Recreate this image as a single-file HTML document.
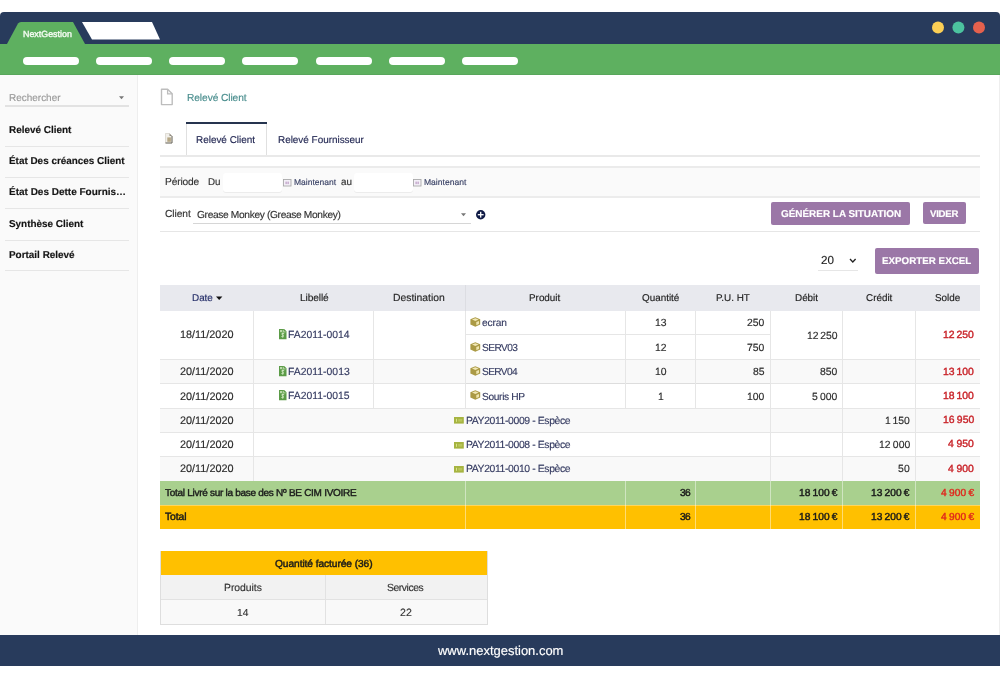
<!DOCTYPE html>
<html><head><meta charset="utf-8"><style>
html,body{margin:0;padding:0;width:1000px;height:679px;overflow:hidden;background:#fff;}
body{position:relative;font-family:"Liberation Sans", sans-serif;text-rendering:geometricPrecision;}
body>div,body>svg{position:absolute;will-change:transform;}
body>div{-webkit-text-stroke-width:0.15px;}
</style></head><body>
<div style="left:0px;top:12px;width:1000px;height:32px;background:#283b5c;border-radius:4px 4px 0 0"></div>
<svg style="left:0;top:0" width="1000" height="80" viewBox="0 0 1000 80">
<path d="M6.7 44.5 L18 23.5 Q19 22 21 22 L73 22 L85.3 44.5 Z" fill="#5eb060"/>
<path d="M82 22 L152 22 L160 39.5 L92 39.5 Z" fill="#fff"/>
<circle cx="938" cy="27.6" r="6" fill="#fccf55"/>
<circle cx="958.4" cy="27.6" r="6" fill="#4cc39f"/>
<circle cx="979" cy="27.6" r="6" fill="#e5614d"/>
</svg>
<div style="left:0px;top:43.5px;width:1000px;height:31px;background:#5eb060;"></div>
<div style="left:0px;top:74px;width:1000px;height:1px;background:#58a65b;"></div>
<div style="left:22.79px;top:25px;font-size:8.90px;line-height:18px;height:18px;color:#f2faf0;font-weight:normal;white-space:nowrap;-webkit-text-stroke:0.4px #f2faf0;">NextGestion</div>
<div style="left:23.0px;top:57px;width:56px;height:8px;background:#fff;border-radius:4px"></div>
<div style="left:96.15px;top:57px;width:56px;height:8px;background:#fff;border-radius:4px"></div>
<div style="left:169.3px;top:57px;width:56px;height:8px;background:#fff;border-radius:4px"></div>
<div style="left:242.45000000000002px;top:57px;width:56px;height:8px;background:#fff;border-radius:4px"></div>
<div style="left:315.6px;top:57px;width:56px;height:8px;background:#fff;border-radius:4px"></div>
<div style="left:388.75px;top:57px;width:56px;height:8px;background:#fff;border-radius:4px"></div>
<div style="left:461.90000000000003px;top:57px;width:56px;height:8px;background:#fff;border-radius:4px"></div>
<div style="left:0px;top:75px;width:137px;height:560px;background:#fafafa;"></div>
<div style="left:137px;top:75px;width:1px;height:560px;background:#eeeeee;"></div>
<div style="left:999px;top:75px;width:1px;height:560px;background:#eeeeee;"></div>
<div style="left:8.70px;top:89px;font-size:9.98px;line-height:20px;height:20px;color:#9a9a9a;font-weight:normal;white-space:nowrap;">Rechercher</div>
<svg style="left:119px;top:95.5px" width="6" height="4"><path d="M0 0.3 L5 0.3 L2.5 3.3 Z" fill="#777"/></svg>
<div style="left:5px;top:105px;width:124px;height:2px;background:#e2e2e2;"></div>
<div style="left:8.80px;top:121px;font-size:9.94px;line-height:20px;height:20px;color:#141414;font-weight:bold;white-space:nowrap;">Relevé Client</div>
<div style="left:8.81px;top:152px;font-size:9.91px;line-height:20px;height:20px;color:#141414;font-weight:bold;white-space:nowrap;">État Des créances Client</div>
<div style="left:8.80px;top:183px;font-size:9.99px;line-height:20px;height:20px;color:#141414;font-weight:bold;white-space:nowrap;">État Des Dette Fournis…</div>
<div style="left:9.20px;top:215px;font-size:9.92px;line-height:20px;height:20px;color:#141414;font-weight:bold;white-space:nowrap;">Synthèse Client</div>
<div style="left:8.80px;top:246px;font-size:9.94px;line-height:20px;height:20px;color:#141414;font-weight:bold;white-space:nowrap;">Portail Relevé</div>
<div style="left:5px;top:145.5px;width:124px;height:1px;background:#e6e6e6;"></div>
<div style="left:5px;top:176.5px;width:124px;height:1px;background:#e6e6e6;"></div>
<div style="left:5px;top:208px;width:124px;height:1px;background:#e6e6e6;"></div>
<div style="left:5px;top:239.5px;width:124px;height:1px;background:#e6e6e6;"></div>
<div style="left:5px;top:270px;width:124px;height:1px;background:#e6e6e6;"></div>
<div style="left:0px;top:635px;width:1000px;height:31px;background:#283b5c;"></div>
<div style="left:437.80px;top:638px;font-size:12.97px;line-height:26px;height:26px;color:#fff;font-weight:normal;white-space:nowrap;">www.nextgestion.com</div>
<svg style="left:160px;top:88px" width="14" height="18" viewBox="0 0 14 18">
<path d="M1.5 1.2 H7.6 L12.2 5.8 V16.6 H1.5 Z" fill="#fff" stroke="#bdbdbd" stroke-width="1.4" stroke-linejoin="round"/>
<path d="M7.6 1.2 V5.8 H12.2" fill="none" stroke="#bdbdbd" stroke-width="1.3"/>
</svg>
<div style="left:186.98px;top:88px;font-size:10.20px;line-height:21px;height:21px;color:#4a8e8e;font-weight:normal;white-space:nowrap;letter-spacing:-0.081px;">Relevé Client</div>
<div style="left:160px;top:155px;width:820px;height:2px;background:#e9e9e9;"></div>
<svg style="left:164.8px;top:132.9px" width="8" height="11" viewBox="0 0 8 11">
<path d="M0.5 0.5 H4.5 L7 3 V10 H0.5 Z" fill="#f1efea" stroke="#cfcbc1" stroke-width="0.6"/>
<path d="M4.5 0.5 L7 3 H4.5 Z" fill="#8f8b80"/>
<path d="M7 3 V10 H0.5" fill="none" stroke="#6e6a60" stroke-width="1"/>
<rect x="2.3" y="4.4" width="3.6" height="4.4" fill="#b5a785"/>
</svg>
<div style="left:186px;top:124px;width:81px;height:31px;background:#fff;border-left:1px solid #e0e0e0;border-right:1px solid #e0e0e0;box-sizing:border-box"></div>
<div style="left:186px;top:122px;width:81px;height:2px;background:#26344f;"></div>
<div style="left:196.01px;top:131px;font-size:9.93px;line-height:20px;height:20px;color:#1f2450;font-weight:normal;white-space:nowrap;">Relevé Client</div>
<div style="left:278.11px;top:131px;font-size:9.91px;line-height:20px;height:20px;color:#1f2450;font-weight:normal;white-space:nowrap;">Relevé Fournisseur</div>
<div style="left:160px;top:167px;width:820px;height:30px;background:#fafafa;"></div>
<div style="left:160px;top:166px;width:820px;height:2px;background:#ebebeb;"></div>
<div style="left:160px;top:196px;width:820px;height:2px;background:#ececec;"></div>
<div style="left:164.88px;top:172px;font-size:10.20px;line-height:21px;height:21px;color:#333;font-weight:normal;white-space:nowrap;letter-spacing:-0.144px;">Période</div>
<div style="left:208.00px;top:173px;font-size:9.80px;line-height:20px;height:20px;color:#333;font-weight:normal;white-space:nowrap;">Du</div>
<div style="left:223px;top:173px;width:58.5px;height:18.5px;background:#fff;border-radius:3px;box-shadow:0 1px 0 #ececec"></div>
<svg style="left:283px;top:178.5px" width="9" height="8" viewBox="0 0 9 8"><rect x="0.5" y="0.5" width="7.5" height="6.5" fill="#f4f0f8" stroke="#aaa" stroke-width="0.9"/><rect x="2.6" y="2.6" width="1" height="2.5" fill="#b08ab8"/><rect x="4.6" y="2.6" width="1" height="2.5" fill="#b08ab8"/></svg>
<div style="left:293.62px;top:174px;font-size:8.50px;line-height:17px;height:17px;color:#3a4266;font-weight:normal;white-space:nowrap;">Maintenant</div>
<div style="left:341.30px;top:173px;font-size:9.90px;line-height:20px;height:20px;color:#333;font-weight:normal;white-space:nowrap;">au</div>
<div style="left:353.5px;top:173px;width:58.5px;height:18.5px;background:#fff;border-radius:3px;box-shadow:0 1px 0 #ececec"></div>
<svg style="left:413px;top:178.5px" width="9" height="8" viewBox="0 0 9 8"><rect x="0.5" y="0.5" width="7.5" height="6.5" fill="#f4f0f8" stroke="#aaa" stroke-width="0.9"/><rect x="2.6" y="2.6" width="1" height="2.5" fill="#b08ab8"/><rect x="4.6" y="2.6" width="1" height="2.5" fill="#b08ab8"/></svg>
<div style="left:424.12px;top:173px;font-size:8.56px;line-height:18px;height:18px;color:#3a4266;font-weight:normal;white-space:nowrap;">Maintenant</div>
<div style="left:160px;top:231px;width:820px;height:1px;background:#e6e6e6;"></div>
<div style="left:165.19px;top:204px;font-size:10.20px;line-height:21px;height:21px;color:#333;font-weight:normal;white-space:nowrap;letter-spacing:-0.060px;">Client</div>
<div style="left:196.69px;top:205px;font-size:10.20px;line-height:21px;height:21px;color:#333;font-weight:normal;white-space:nowrap;letter-spacing:-0.342px;">Grease Monkey (Grease Monkey)</div>
<div style="left:193px;top:223px;width:278px;height:1px;background:#d6d6d6;"></div>
<svg style="left:461px;top:212.8px" width="6" height="4"><path d="M0 0.3 L5 0.3 L2.5 3.3 Z" fill="#777"/></svg>
<svg style="left:475.8px;top:209.8px" width="10" height="10" viewBox="0 0 10 10"><circle cx="4.7" cy="4.7" r="4.7" fill="#0f1a45"/><rect x="1.8" y="4.05" width="5.8" height="1.3" fill="#fff"/><rect x="4.05" y="1.8" width="1.3" height="5.8" fill="#fff"/></svg>
<div style="left:771px;top:202px;width:139px;height:23px;background:#9b77a7;border-radius:2px"></div>
<div style="left:780.60px;top:205px;font-size:9.94px;line-height:20px;height:20px;color:#fff;font-weight:bold;white-space:nowrap;">GÉNÉRER LA SITUATION</div>
<div style="left:922.5px;top:202px;width:42.5px;height:22px;background:#9b77a7;border-radius:2px"></div>
<div style="left:929.90px;top:205px;font-size:9.60px;line-height:20px;height:20px;color:#fff;font-weight:bold;white-space:nowrap;letter-spacing:-0.248px;">VIDER</div>
<div style="left:821.42px;top:249px;font-size:11.65px;line-height:24px;height:24px;color:#222;font-weight:normal;white-space:nowrap;">20</div>
<svg style="left:849px;top:258px" width="8" height="6" viewBox="0 0 8 6"><path d="M1 1 L3.8 4 L6.6 1" fill="none" stroke="#222" stroke-width="1.3"/></svg>
<div style="left:818px;top:270px;width:40px;height:1px;background:#e6e6e6;"></div>
<div style="left:875px;top:248px;width:104px;height:25.5px;background:#9b77a7;border-radius:2px"></div>
<div style="left:882.21px;top:252px;font-size:9.80px;line-height:20px;height:20px;color:#fff;font-weight:bold;white-space:nowrap;">EXPORTER EXCEL</div>
<div style="left:160px;top:285px;width:820px;height:25.5px;background:#e8e9ee;"></div>
<div style="left:464.5px;top:285px;width:1px;height:25.5px;background:#dcdde2;"></div>
<div style="left:192.11px;top:289px;font-size:9.90px;line-height:20px;height:20px;color:#27306a;font-weight:normal;white-space:nowrap;">Date</div>
<svg style="left:215.5px;top:296px" width="7" height="5"><path d="M0 0.5 L6.4 0.5 L3.2 4 Z" fill="#111"/></svg>
<div style="left:299.78px;top:288px;font-size:10.20px;line-height:21px;height:21px;color:#262626;font-weight:normal;white-space:nowrap;letter-spacing:-0.125px;">Libellé</div>
<div style="left:393.17px;top:288px;font-size:10.37px;line-height:21px;height:21px;color:#262626;font-weight:normal;white-space:nowrap;">Destination</div>
<div style="left:529.21px;top:289px;font-size:9.90px;line-height:20px;height:20px;color:#222;font-weight:normal;white-space:nowrap;">Produit</div>
<div style="left:641.79px;top:289px;font-size:9.90px;line-height:20px;height:20px;color:#222;font-weight:normal;white-space:nowrap;">Quantité</div>
<div style="left:715.72px;top:289px;font-size:9.90px;line-height:20px;height:20px;color:#222;font-weight:normal;white-space:nowrap;">P.U. HT</div>
<div style="left:794.57px;top:289px;font-size:9.90px;line-height:20px;height:20px;color:#222;font-weight:normal;white-space:nowrap;">Débit</div>
<div style="left:865.59px;top:289px;font-size:9.90px;line-height:20px;height:20px;color:#222;font-weight:normal;white-space:nowrap;">Crédit</div>
<div style="left:935.08px;top:289px;font-size:9.90px;line-height:20px;height:20px;color:#222;font-weight:normal;white-space:nowrap;">Solde</div>
<div style="left:160px;top:310.5px;width:820px;height:48.5px;background:#fff;"></div>
<div style="left:160px;top:359px;width:820px;height:24.5px;background:#f9f9f9;"></div>
<div style="left:160px;top:383.5px;width:820px;height:24.5px;background:#fff;"></div>
<div style="left:160px;top:408px;width:820px;height:24.19999999999999px;background:#f9f9f9;"></div>
<div style="left:160px;top:432.2px;width:820px;height:24.30000000000001px;background:#fff;"></div>
<div style="left:160px;top:456.5px;width:820px;height:24.5px;background:#f9f9f9;"></div>
<div style="left:160px;top:481px;width:820px;height:24px;background:#a9d08e;"></div>
<div style="left:160px;top:505px;width:820px;height:24px;background:#ffc000;"></div>
<div style="left:160px;top:358.5px;width:820px;height:1px;background:#e6e6e6;"></div>
<div style="left:160px;top:383.0px;width:820px;height:1px;background:#e6e6e6;"></div>
<div style="left:160px;top:407.5px;width:820px;height:1px;background:#e6e6e6;"></div>
<div style="left:160px;top:431.7px;width:820px;height:1px;background:#e6e6e6;"></div>
<div style="left:160px;top:456.0px;width:820px;height:1px;background:#e6e6e6;"></div>
<div style="left:465px;top:334.3px;width:305.5px;height:1px;background:#e6e6e6;"></div>
<div style="left:465px;top:383px;width:305.5px;height:1px;background:#dddddd;"></div>
<div style="left:625px;top:383px;width:1px;height:25px;background:#dddddd;"></div>
<div style="left:695px;top:383px;width:1px;height:25px;background:#dddddd;"></div>
<div style="left:253.0px;top:310.5px;width:1px;height:97.5px;background:#e6e6e6;"></div>
<div style="left:373.0px;top:310.5px;width:1px;height:97.5px;background:#e6e6e6;"></div>
<div style="left:464.5px;top:310.5px;width:1px;height:97.5px;background:#e6e6e6;"></div>
<div style="left:625.0px;top:310.5px;width:1px;height:97.5px;background:#e6e6e6;"></div>
<div style="left:695.0px;top:310.5px;width:1px;height:97.5px;background:#e6e6e6;"></div>
<div style="left:770.0px;top:310.5px;width:1px;height:97.5px;background:#e6e6e6;"></div>
<div style="left:842.0px;top:310.5px;width:1px;height:97.5px;background:#e6e6e6;"></div>
<div style="left:915.0px;top:310.5px;width:1px;height:97.5px;background:#e6e6e6;"></div>
<div style="left:253.0px;top:408px;width:1px;height:73px;background:#e6e6e6;"></div>
<div style="left:770.0px;top:408px;width:1px;height:73px;background:#e6e6e6;"></div>
<div style="left:842.0px;top:408px;width:1px;height:73px;background:#e6e6e6;"></div>
<div style="left:915.0px;top:408px;width:1px;height:73px;background:#e6e6e6;"></div>
<div style="left:464.5px;top:481px;width:1px;height:48px;background:rgba(255,255,255,0.45);"></div>
<div style="left:625.0px;top:481px;width:1px;height:48px;background:rgba(255,255,255,0.45);"></div>
<div style="left:695.0px;top:481px;width:1px;height:48px;background:rgba(255,255,255,0.45);"></div>
<div style="left:770.0px;top:481px;width:1px;height:48px;background:rgba(255,255,255,0.45);"></div>
<div style="left:842.0px;top:481px;width:1px;height:48px;background:rgba(255,255,255,0.45);"></div>
<div style="left:915.0px;top:481px;width:1px;height:48px;background:rgba(255,255,255,0.45);"></div>
<div style="left:160px;top:504.5px;width:820px;height:1px;background:rgba(255,255,255,0.35);"></div>
<div style="left:180.03px;top:324px;font-size:10.85px;line-height:22px;height:22px;color:#2b2b2b;font-weight:normal;white-space:nowrap;">18/11/2020</div>
<svg style="left:279px;top:329.4px" width="8" height="11" viewBox="0 0 8 11"><path d="M0 0 H5.2 L7.5 2.3 V10.3 H0 Z" fill="#5b9b47"/><rect x="1" y="1" width="2.2" height="2.2" fill="#b9d9a8"/><path d="M4.3 0.8 V2.9 H6.6" fill="none" stroke="#cfe6c0" stroke-width="0.8"/><path d="M5.2 4.6 Q3.9 3.9 3 4.5 Q2.2 5.3 3.5 5.9 Q4.8 6.4 4.3 7.4 Q3.5 8.1 2.4 7.5 M3.8 3.6 V8.6" fill="none" stroke="#d6ecc8" stroke-width="0.9"/></svg>
<div style="left:287.77px;top:325px;font-size:10.38px;line-height:21px;height:21px;color:#363c62;font-weight:normal;white-space:nowrap;">FA2011-0014</div>
<svg style="left:469.8px;top:317.4px" width="11" height="10" viewBox="0 0 11 10"><path d="M5.3 0.3 L10.2 2.3 V7.6 L5.3 9.7 L0.4 7.6 V2.3 Z" fill="#ab9a45"/><path d="M5.3 1.3 L8.6 2.6 L5.3 3.9 L2 2.6 Z" fill="#f1e7b5"/><path d="M6.3 5 L9 3.9 V7 L6.3 8.2 Z" fill="#efe5ae"/></svg>
<div style="left:481.59px;top:313px;font-size:10.20px;line-height:21px;height:21px;color:#363c62;font-weight:normal;white-space:nowrap;letter-spacing:-0.120px;">ecran</div>
<svg style="left:469.8px;top:341.8px" width="11" height="10" viewBox="0 0 11 10"><path d="M5.3 0.3 L10.2 2.3 V7.6 L5.3 9.7 L0.4 7.6 V2.3 Z" fill="#ab9a45"/><path d="M5.3 1.3 L8.6 2.6 L5.3 3.9 L2 2.6 Z" fill="#f1e7b5"/><path d="M6.3 5 L9 3.9 V7 L6.3 8.2 Z" fill="#efe5ae"/></svg>
<div style="left:481.69px;top:338px;font-size:10.20px;line-height:21px;height:21px;color:#363c62;font-weight:normal;white-space:nowrap;letter-spacing:-0.589px;">SERV03</div>
<div style="left:655.22px;top:313px;font-size:10.40px;line-height:21px;height:21px;color:#2b2b2b;font-weight:normal;white-space:nowrap;">13</div>
<div style="left:655.22px;top:338px;font-size:10.40px;line-height:21px;height:21px;color:#2b2b2b;font-weight:normal;white-space:nowrap;">12</div>
<div style="left:747.45px;top:313px;font-size:10.40px;line-height:21px;height:21px;color:#2b2b2b;font-weight:normal;white-space:nowrap;">250</div>
<div style="left:747.45px;top:338px;font-size:10.40px;line-height:21px;height:21px;color:#2b2b2b;font-weight:normal;white-space:nowrap;">750</div>
<div style="left:806.77px;top:326px;font-size:10.40px;line-height:21px;height:21px;color:#2b2b2b;font-weight:normal;white-space:nowrap;word-spacing:-1.18px;">12 250</div>
<div style="left:943.17px;top:325px;font-size:10.40px;line-height:21px;height:21px;color:#c9252b;font-weight:normal;white-space:nowrap;word-spacing:-0.98px;-webkit-text-stroke:0.4px #c9252b;">12 250</div>
<div style="left:180.36px;top:361px;font-size:10.87px;line-height:22px;height:22px;color:#2b2b2b;font-weight:normal;white-space:nowrap;">20/11/2020</div>
<svg style="left:279px;top:366px" width="8" height="11" viewBox="0 0 8 11"><path d="M0 0 H5.2 L7.5 2.3 V10.3 H0 Z" fill="#5b9b47"/><rect x="1" y="1" width="2.2" height="2.2" fill="#b9d9a8"/><path d="M4.3 0.8 V2.9 H6.6" fill="none" stroke="#cfe6c0" stroke-width="0.8"/><path d="M5.2 4.6 Q3.9 3.9 3 4.5 Q2.2 5.3 3.5 5.9 Q4.8 6.4 4.3 7.4 Q3.5 8.1 2.4 7.5 M3.8 3.6 V8.6" fill="none" stroke="#d6ecc8" stroke-width="0.9"/></svg>
<div style="left:287.77px;top:362px;font-size:10.41px;line-height:21px;height:21px;color:#363c62;font-weight:normal;white-space:nowrap;">FA2011-0013</div>
<svg style="left:469.8px;top:366px" width="11" height="10" viewBox="0 0 11 10"><path d="M5.3 0.3 L10.2 2.3 V7.6 L5.3 9.7 L0.4 7.6 V2.3 Z" fill="#ab9a45"/><path d="M5.3 1.3 L8.6 2.6 L5.3 3.9 L2 2.6 Z" fill="#f1e7b5"/><path d="M6.3 5 L9 3.9 V7 L6.3 8.2 Z" fill="#efe5ae"/></svg>
<div style="left:481.69px;top:362px;font-size:10.20px;line-height:21px;height:21px;color:#363c62;font-weight:normal;white-space:nowrap;letter-spacing:-0.630px;">SERV04</div>
<div style="left:655.17px;top:362px;font-size:10.40px;line-height:21px;height:21px;color:#2b2b2b;font-weight:normal;white-space:nowrap;">10</div>
<div style="left:753.17px;top:362px;font-size:10.40px;line-height:21px;height:21px;color:#2b2b2b;font-weight:normal;white-space:nowrap;">85</div>
<div style="left:820.05px;top:362px;font-size:10.40px;line-height:21px;height:21px;color:#2b2b2b;font-weight:normal;white-space:nowrap;">850</div>
<div style="left:943.17px;top:362px;font-size:10.40px;line-height:21px;height:21px;color:#c9252b;font-weight:normal;white-space:nowrap;word-spacing:-0.98px;-webkit-text-stroke:0.4px #c9252b;">13 100</div>
<div style="left:180.36px;top:386px;font-size:10.87px;line-height:22px;height:22px;color:#2b2b2b;font-weight:normal;white-space:nowrap;">20/11/2020</div>
<svg style="left:279px;top:390.4px" width="8" height="11" viewBox="0 0 8 11"><path d="M0 0 H5.2 L7.5 2.3 V10.3 H0 Z" fill="#5b9b47"/><rect x="1" y="1" width="2.2" height="2.2" fill="#b9d9a8"/><path d="M4.3 0.8 V2.9 H6.6" fill="none" stroke="#cfe6c0" stroke-width="0.8"/><path d="M5.2 4.6 Q3.9 3.9 3 4.5 Q2.2 5.3 3.5 5.9 Q4.8 6.4 4.3 7.4 Q3.5 8.1 2.4 7.5 M3.8 3.6 V8.6" fill="none" stroke="#d6ecc8" stroke-width="0.9"/></svg>
<div style="left:287.77px;top:386px;font-size:10.40px;line-height:21px;height:21px;color:#363c62;font-weight:normal;white-space:nowrap;">FA2011-0015</div>
<svg style="left:469.8px;top:390.4px" width="11" height="10" viewBox="0 0 11 10"><path d="M5.3 0.3 L10.2 2.3 V7.6 L5.3 9.7 L0.4 7.6 V2.3 Z" fill="#ab9a45"/><path d="M5.3 1.3 L8.6 2.6 L5.3 3.9 L2 2.6 Z" fill="#f1e7b5"/><path d="M6.3 5 L9 3.9 V7 L6.3 8.2 Z" fill="#efe5ae"/></svg>
<div style="left:481.69px;top:387px;font-size:10.20px;line-height:21px;height:21px;color:#363c62;font-weight:normal;white-space:nowrap;letter-spacing:-0.348px;">Souris HP</div>
<div style="left:658.13px;top:387px;font-size:10.40px;line-height:21px;height:21px;color:#2b2b2b;font-weight:normal;white-space:nowrap;">1</div>
<div style="left:747.45px;top:387px;font-size:10.40px;line-height:21px;height:21px;color:#2b2b2b;font-weight:normal;white-space:nowrap;">100</div>
<div style="left:811.98px;top:387px;font-size:10.40px;line-height:21px;height:21px;color:#2b2b2b;font-weight:normal;white-space:nowrap;word-spacing:-0.67px;">5 000</div>
<div style="left:943.17px;top:386px;font-size:10.40px;line-height:21px;height:21px;color:#c9252b;font-weight:normal;white-space:nowrap;word-spacing:-0.98px;-webkit-text-stroke:0.4px #c9252b;">18 100</div>
<div style="left:180.36px;top:410px;font-size:10.87px;line-height:22px;height:22px;color:#2b2b2b;font-weight:normal;white-space:nowrap;">20/11/2020</div>
<svg style="left:454.1px;top:417.20000000000005px" width="10" height="7" viewBox="0 0 10 7"><rect x="0" y="0" width="9.8" height="6.6" fill="#a6b441"/><rect x="2" y="1.8" width="1" height="3" fill="#d9e38a"/><rect x="4.2" y="2" width="4" height="2.6" fill="#b9c65a"/></svg>
<div style="left:465.97px;top:411px;font-size:10.40px;line-height:21px;height:21px;color:#363c62;font-weight:normal;white-space:nowrap;letter-spacing:-0.373px;">PAY2011-0009 - Espèce</div>
<div style="left:885.17px;top:411px;font-size:10.40px;line-height:21px;height:21px;color:#2b2b2b;font-weight:normal;white-space:nowrap;word-spacing:-1.16px;">1 150</div>
<div style="left:943.07px;top:410px;font-size:10.40px;line-height:21px;height:21px;color:#c9252b;font-weight:normal;white-space:nowrap;word-spacing:-0.58px;-webkit-text-stroke:0.4px #c9252b;">16 950</div>
<div style="left:180.36px;top:434px;font-size:10.87px;line-height:22px;height:22px;color:#2b2b2b;font-weight:normal;white-space:nowrap;">20/11/2020</div>
<svg style="left:454.1px;top:441.6px" width="10" height="7" viewBox="0 0 10 7"><rect x="0" y="0" width="9.8" height="6.6" fill="#a6b441"/><rect x="2" y="1.8" width="1" height="3" fill="#d9e38a"/><rect x="4.2" y="2" width="4" height="2.6" fill="#b9c65a"/></svg>
<div style="left:465.97px;top:435px;font-size:10.40px;line-height:21px;height:21px;color:#363c62;font-weight:normal;white-space:nowrap;letter-spacing:-0.373px;">PAY2011-0008 - Espèce</div>
<div style="left:878.87px;top:435px;font-size:10.40px;line-height:21px;height:21px;color:#2b2b2b;font-weight:normal;white-space:nowrap;word-spacing:-0.58px;">12 000</div>
<div style="left:948.49px;top:434px;font-size:10.40px;line-height:21px;height:21px;color:#c9252b;font-weight:normal;white-space:nowrap;word-spacing:-0.28px;-webkit-text-stroke:0.4px #c9252b;">4 950</div>
<div style="left:180.36px;top:458px;font-size:10.87px;line-height:22px;height:22px;color:#2b2b2b;font-weight:normal;white-space:nowrap;">20/11/2020</div>
<svg style="left:454.1px;top:465.8px" width="10" height="7" viewBox="0 0 10 7"><rect x="0" y="0" width="9.8" height="6.6" fill="#a6b441"/><rect x="2" y="1.8" width="1" height="3" fill="#d9e38a"/><rect x="4.2" y="2" width="4" height="2.6" fill="#b9c65a"/></svg>
<div style="left:465.97px;top:459px;font-size:10.40px;line-height:21px;height:21px;color:#363c62;font-weight:normal;white-space:nowrap;letter-spacing:-0.373px;">PAY2011-0010 - Espèce</div>
<div style="left:898.28px;top:459px;font-size:10.40px;line-height:21px;height:21px;color:#2b2b2b;font-weight:normal;white-space:nowrap;letter-spacing:0.18px;">50</div>
<div style="left:948.49px;top:459px;font-size:10.40px;line-height:21px;height:21px;color:#c9252b;font-weight:normal;white-space:nowrap;word-spacing:-0.28px;-webkit-text-stroke:0.4px #c9252b;">4 900</div>
<div style="left:165.40px;top:484px;font-size:10.00px;line-height:20px;height:20px;color:#1a1a1a;font-weight:normal;white-space:nowrap;letter-spacing:-0.281px;-webkit-text-stroke:0.4px #1a1a1a;">Total Livré sur la base des Nº BE CIM IVOIRE</div>
<div style="left:679.79px;top:483px;font-size:10.20px;line-height:21px;height:21px;color:#1a1a1a;font-weight:normal;white-space:nowrap;letter-spacing:-0.71px;-webkit-text-stroke:0.45px #1a1a1a;">36</div>
<div style="left:798.68px;top:483px;font-size:10.20px;line-height:21px;height:21px;color:#1a1a1a;font-weight:normal;white-space:nowrap;word-spacing:-0.58px;-webkit-text-stroke:0.45px #1a1a1a;">18 100 €</div>
<div style="left:871.28px;top:483px;font-size:10.20px;line-height:21px;height:21px;color:#1a1a1a;font-weight:normal;white-space:nowrap;word-spacing:-0.58px;-webkit-text-stroke:0.45px #1a1a1a;">13 200 €</div>
<div style="left:940.80px;top:483px;font-size:10.20px;line-height:21px;height:21px;color:#e0261c;font-weight:normal;white-space:nowrap;word-spacing:-0.38px;-webkit-text-stroke:0.4px #e0261c;">4 900 €</div>
<div style="left:165.29px;top:507px;font-size:10.40px;line-height:21px;height:21px;color:#1a1a1a;font-weight:normal;white-space:nowrap;letter-spacing:-0.103px;-webkit-text-stroke:0.45px #1a1a1a;">Total</div>
<div style="left:679.79px;top:507px;font-size:10.20px;line-height:21px;height:21px;color:#1a1a1a;font-weight:normal;white-space:nowrap;letter-spacing:-0.71px;-webkit-text-stroke:0.45px #1a1a1a;">36</div>
<div style="left:798.68px;top:507px;font-size:10.20px;line-height:21px;height:21px;color:#1a1a1a;font-weight:normal;white-space:nowrap;word-spacing:-0.58px;-webkit-text-stroke:0.45px #1a1a1a;">18 100 €</div>
<div style="left:871.28px;top:507px;font-size:10.20px;line-height:21px;height:21px;color:#1a1a1a;font-weight:normal;white-space:nowrap;word-spacing:-0.58px;-webkit-text-stroke:0.45px #1a1a1a;">13 200 €</div>
<div style="left:940.80px;top:507px;font-size:10.20px;line-height:21px;height:21px;color:#e0261c;font-weight:normal;white-space:nowrap;word-spacing:-0.38px;-webkit-text-stroke:0.4px #e0261c;">4 900 €</div>
<div style="left:160px;top:551px;width:327.5px;height:24px;background:#ffc000;"></div>
<div style="left:160px;top:575px;width:327.5px;height:24.5px;background:#f2f2f2;"></div>
<div style="left:160px;top:599.5px;width:327.5px;height:24.5px;background:#f9f9f9;"></div>
<div style="left:160px;top:551px;width:328px;height:73.5px;box-sizing:border-box;border:1px solid #dedede;border-top:none;background:transparent"></div>
<div style="left:161px;top:599px;width:326px;height:1px;background:#e2e2e2;"></div>
<div style="left:324.5px;top:575px;width:1px;height:49px;background:#e2e2e2;"></div>
<div style="left:275.19px;top:554px;font-size:10.20px;line-height:21px;height:21px;color:#1a1a1a;font-weight:normal;white-space:nowrap;letter-spacing:-0.072px;-webkit-text-stroke:0.45px #1a1a1a;">Quantité facturée (36)</div>
<div style="left:223.67px;top:578px;font-size:10.40px;line-height:21px;height:21px;color:#333;font-weight:normal;white-space:nowrap;letter-spacing:-0.031px;">Produits</div>
<div style="left:387.38px;top:578px;font-size:10.40px;line-height:21px;height:21px;color:#333;font-weight:normal;white-space:nowrap;letter-spacing:-0.442px;">Services</div>
<div style="left:236.88px;top:603px;font-size:10.20px;line-height:21px;height:21px;color:#333;font-weight:normal;white-space:nowrap;">14</div>
<div style="left:399.87px;top:602px;font-size:10.59px;line-height:22px;height:22px;color:#333;font-weight:normal;white-space:nowrap;">22</div>
</body></html>
